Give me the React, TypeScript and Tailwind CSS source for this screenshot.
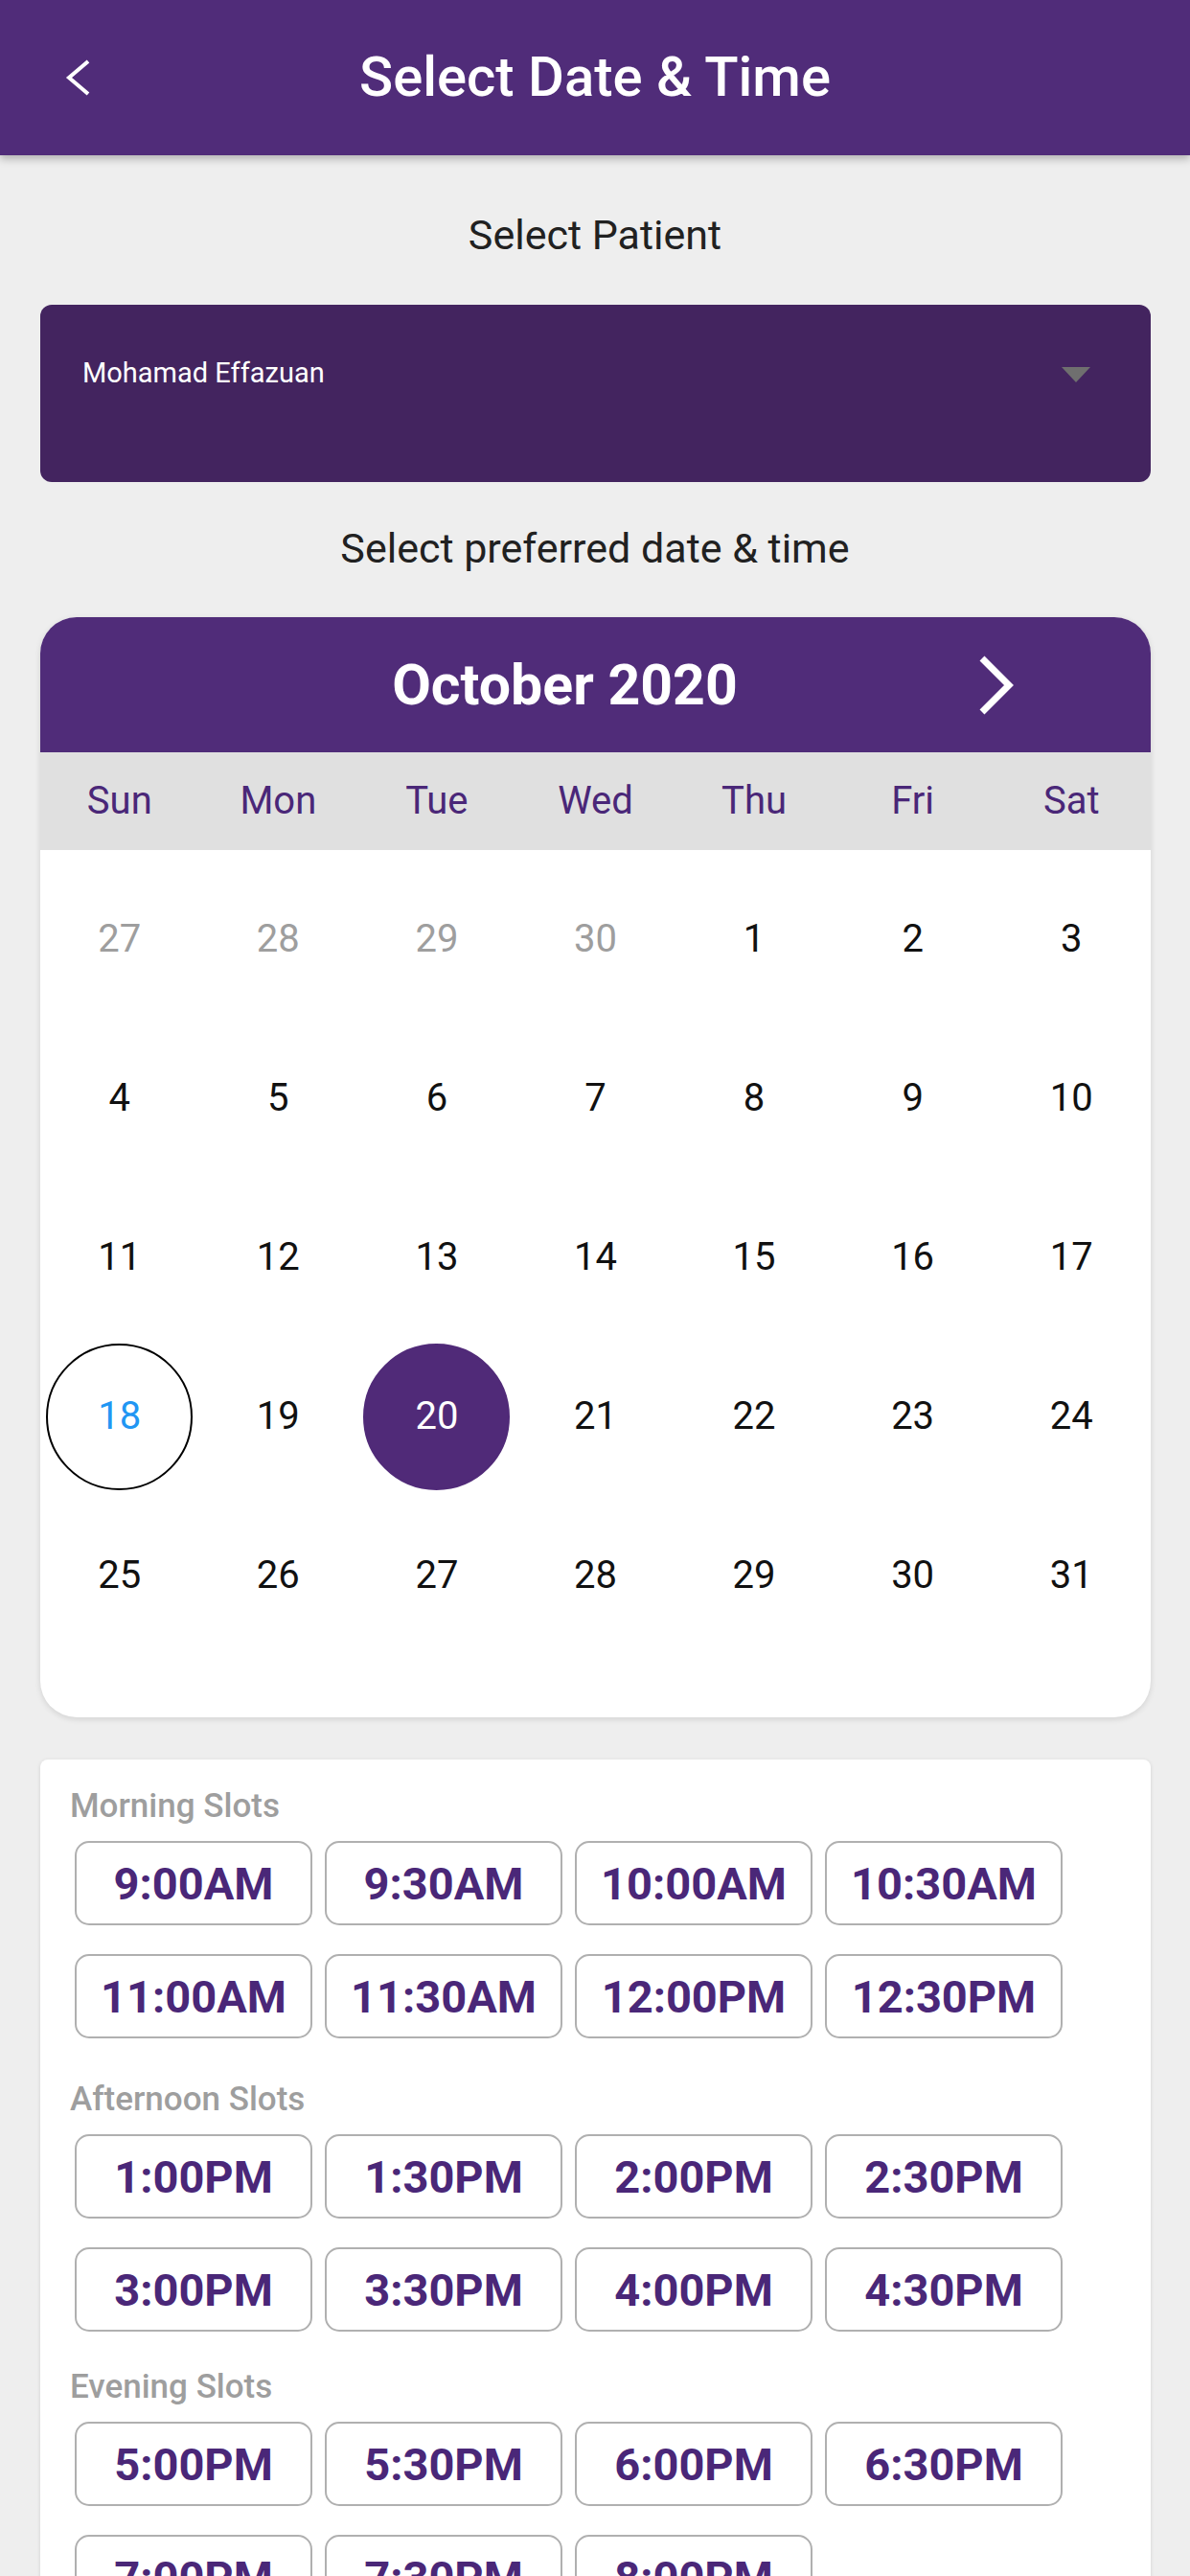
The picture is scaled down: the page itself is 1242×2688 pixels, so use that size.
import React from "react";

const weekDays = ["Sun", "Mon", "Tue", "Wed", "Thu", "Fri", "Sat"];

const weeks: { d: number; muted?: boolean }[][] = [
  [{ d: 27, muted: true }, { d: 28, muted: true }, { d: 29, muted: true }, { d: 30, muted: true }, { d: 1 }, { d: 2 }, { d: 3 }],
  [4, 5, 6, 7, 8, 9, 10].map((d) => ({ d })),
  [11, 12, 13, 14, 15, 16, 17].map((d) => ({ d })),
  [18, 19, 20, 21, 22, 23, 24].map((d) => ({ d })),
  [25, 26, 27, 28, 29, 30, 31].map((d) => ({ d })),
];

const slotGroups = [
  {
    title: "Morning Slots",
    gap: "pt-[29px]",
    times: ["9:00AM", "9:30AM", "10:00AM", "10:30AM", "11:00AM", "11:30AM", "12:00PM", "12:30PM"],
  },
  {
    title: "Afternoon Slots",
    gap: "pt-[44px]",
    times: ["1:00PM", "1:30PM", "2:00PM", "2:30PM", "3:00PM", "3:30PM", "4:00PM", "4:30PM"],
  },
  {
    title: "Evening Slots",
    gap: "pt-[38px]",
    times: ["5:00PM", "5:30PM", "6:00PM", "6:30PM", "7:00PM", "7:30PM", "8:00PM"],
  },
];

function DayCell({ d, muted }: { d: number; muted?: boolean }) {
  const today = !muted && d === 18;
  const selected = !muted && d === 20;
  let circle = "border-[2.5px] border-transparent";
  let text = muted ? "text-[#9e9e9e]" : "text-[#111111]";
  if (today) {
    circle = "border-[2.5px] border-black";
    text = "text-[#2196f3]";
  }
  if (selected) {
    circle = "bg-[#502a78] border-[2.5px] border-[#502a78]";
    text = "text-white";
  }
  return (
    <div className="h-[166px] flex items-center justify-center">
      <div className={`w-[153px] h-[153px] rounded-full flex items-center justify-center ${circle}`}>
        <span className={`text-[40px] leading-none ${text}`}>{d}</span>
      </div>
    </div>
  );
}

export default function App() {
  return (
    <div
      className="w-[1242px] h-[2688px] overflow-hidden bg-[#eeeeee]"
      style={{ fontFamily: "Roboto, 'Noto Sans', sans-serif" }}
    >
      {/* Top bar */}
      <header className="h-[162px] bg-[#502c79] flex items-center shadow-[0_4px_8px_rgba(0,0,0,0.25)] relative z-10">
        <div className="w-[160px] pl-[68px]">
          <svg width="28" height="40" viewBox="0 0 28 40">
            <polyline points="24,3 4,20 24,37" fill="none" stroke="white" strokeWidth="4" />
          </svg>
        </div>
        <h1 className="flex-1 text-center text-white text-[58px] font-medium leading-none -mt-[2px]">
          Select Date &amp; Time
        </h1>
        <div className="w-[160px]" />
      </header>

      <p className="mt-[58px] text-center text-[43px] leading-[50px] text-[#212121]">Select Patient</p>

      {/* Patient dropdown */}
      <div className="mt-[48px] ml-[42px] mr-[41px] h-[185px] rounded-[12px] bg-[#43245f] flex items-start justify-between pl-[44px] pr-[63px] pt-[54px]">
        <span className="text-white text-[29px] leading-[34px]">Mohamad Effazuan</span>
        <svg width="30" height="16" viewBox="0 0 30 16" className="mt-[11px]">
          <polygon points="0,0 30,0 15,16" fill="#6f6f6f" />
        </svg>
      </div>

      <p className="mt-[44px] text-center text-[43px] leading-[50px] text-[#212121]">
        Select preferred date &amp; time
      </p>

      {/* Calendar */}
      <div className="mt-[47px] ml-[42px] mr-[41px] rounded-[38px] bg-white overflow-hidden shadow-[0_2px_6px_rgba(0,0,0,0.12)]">
        <div className="h-[141px] bg-[#502c79] flex items-center">
          <div className="flex-1 pl-[117px] text-center text-white text-[59px] font-bold leading-none">October 2020</div>
          <svg width="40" height="62" viewBox="0 0 40 62" className="mr-[141px]">
            <polyline points="5,3 33,31 5,59" fill="none" stroke="white" strokeWidth="7" />
          </svg>
        </div>
        <div className="h-[102px] bg-[#e0e0e0] grid grid-cols-7 items-center">
          {weekDays.map((w) => (
            <div key={w} className="text-center text-[40px] text-[#4a2778] leading-none">
              {w}
            </div>
          ))}
        </div>
        <div className="pt-[10px] pb-[65px] grid grid-cols-7">
          {weeks.flat().map((c, i) => (
            <DayCell key={i} d={c.d} muted={c.muted} />
          ))}
        </div>
      </div>

      {/* Time slots */}
      <div className="mt-[44px] ml-[42px] mr-[41px] rounded-[8px] bg-white shadow-[0_1px_4px_rgba(0,0,0,0.12)] pb-[60px]">
        {slotGroups.map((g) => (
          <div key={g.title} className={g.gap}>
            <div className="pl-[31px] text-[35px] leading-[40px] font-medium text-[#9e9e9e]">{g.title}</div>
            <div className="mt-[16px] pl-[36px] grid grid-cols-[repeat(4,248px)] gap-x-[13px] gap-y-[30px]">
              {g.times.map((t) => (
                <div
                  key={t}
                  className="h-[88px] rounded-[15px] border-2 border-[#b0b0b0] flex items-center justify-center text-[47px] font-bold text-[#4a2778] leading-none"
                >
                  {t}
                </div>
              ))}
            </div>
          </div>
        ))}
      </div>
    </div>
  );
}
